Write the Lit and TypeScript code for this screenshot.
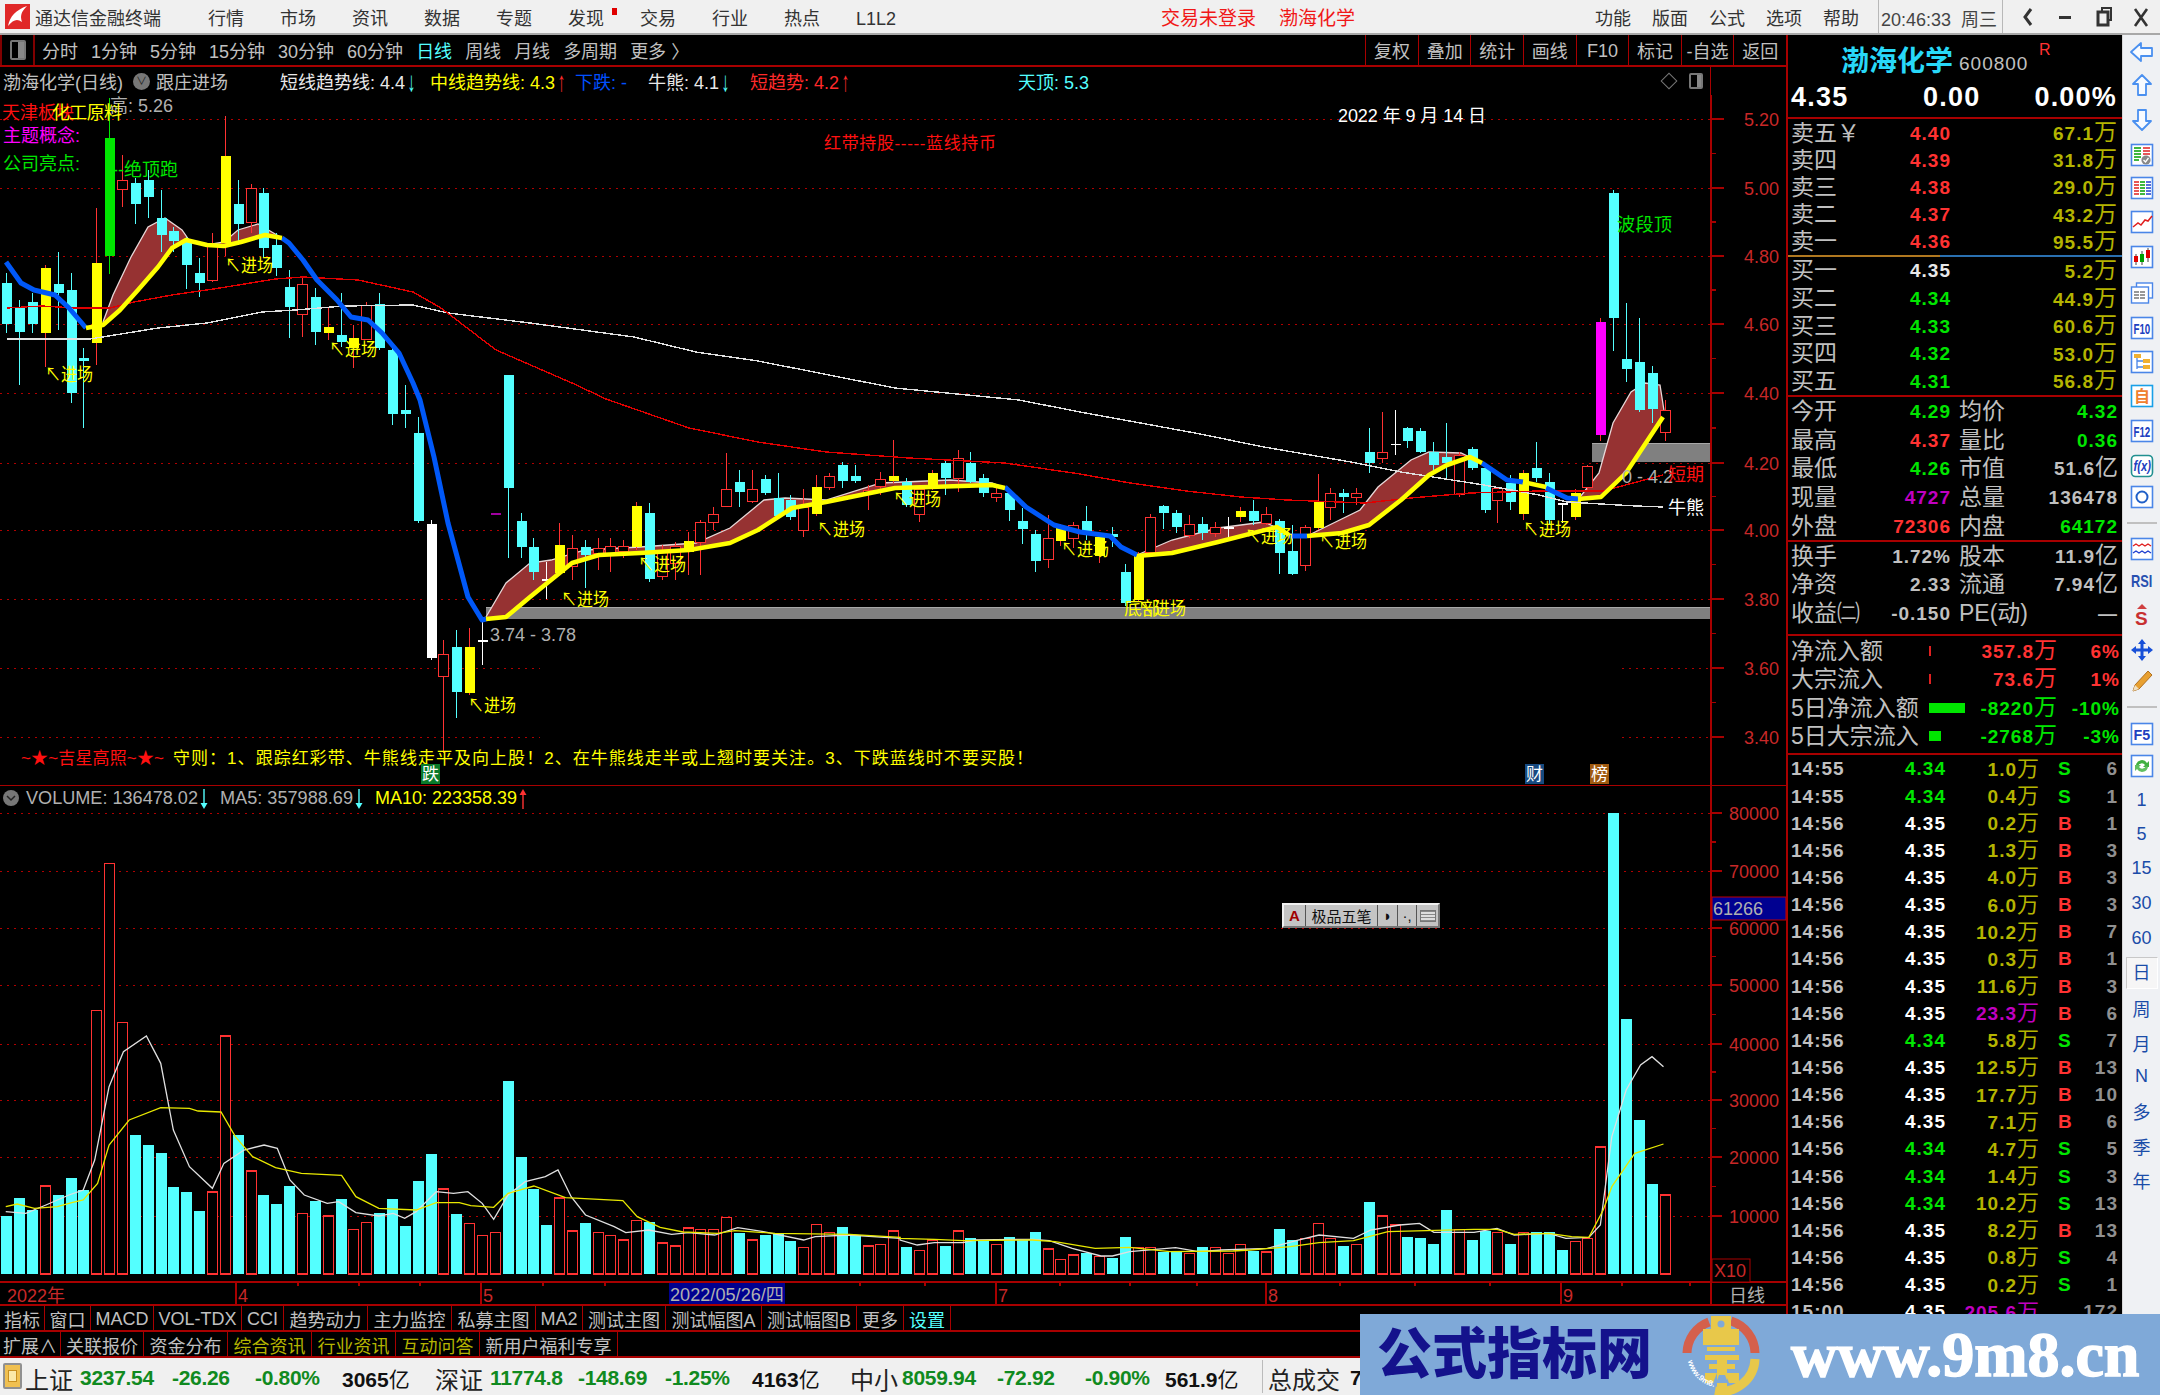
import { LitElement, html, css, svg, nothing } from "lit";
import { customElement } from "lit/decorators.js";

type P = [number, number];
const X = (i: number) => 6.3 + 12.855 * i;
const pts = (a: P[]) => a.map((p) => p.join(",")).join(" ");

const CANDLES: [string, number, number, number, number][] = [
  ["c",283,324,273,333],["c",307,332,300,385],["c",302,324,293,333],["y",268,333,265,367],["c",284,293,252,330],
  ["c",290,393,273,403],["c",358,361,348,428],["y",263,343,208,365],["g",138,256,98,274],["r",180,189,155,207],
  ["c",183,204,178,224],["c",180,197,170,218],["c",218,235,190,252],["c",231,241,227,252],["c",240,265,237,289],
  ["c",273,283,258,297],["r",245,280,233,282],["y",156,243,116,256],["c",204,224,180,245],["r",188,222,184,233],
  ["c",193,248,188,258],["c",245,268,233,276],["c",287,307,270,338],["r",284,314,277,337],["c",297,332,288,345],
  ["y",327,333,308,340],["c",335,342,293,347],["y",338,348,325,368],["r",305,339,302,340],["c",304,348,293,350],
  ["c",350,414,345,425],["c",410,414,385,428],["c",433,521,417,523],["w",524,658,520,660],["r",654,676,640,753],
  ["c",647,692,630,718],["y",647,693,628,695],["w",640,642,622,665],["p",513,515,513,515],["c",375,488,375,558],
  ["c",521,547,513,558],["c",547,572,538,580],["w",579,581,562,599],["y",545,573,523,575],["r",548,566,535,580],
  ["c",547,555,540,588],["r",548,553,538,570],["r",546,553,538,572],["r",546,551,540,558],["y",506,547,502,550],
  ["c",513,579,503,582],["r",550,576,545,580],["r",546,563,542,580],["y",541,552,532,575],["r",522,542,520,575],
  ["r",514,522,507,530],["r",489,506,453,507],["c",482,492,470,507],["r",489,501,470,503],["c",479,493,475,495],
  ["c",498,516,473,518],["c",500,517,495,520],["r",507,530,489,537],["y",487,514,475,516],["r",476,487,473,490],
  ["c",465,481,462,488],["c",476,481,465,483],["r",490,493,485,510],["r",479,486,472,495],["y",476,481,440,483],
  ["c",482,505,478,507],["r",489,514,485,522],["y",473,487,470,490],["c",463,478,461,495],["r",458,478,450,492],
  ["c",463,482,452,483],["c",478,493,474,497],["r",493,497,488,502],["c",493,510,490,521],["c",521,529,508,544],
  ["c",534,561,530,572],["r",538,559,515,568],["y",527,541,524,546],["r",525,538,522,548],["c",521,533,506,540],
  ["y",537,556,535,563],["c",534,537,527,547],["c",572,603,564,606],["y",554,600,552,602],["r",517,552,514,555],
  ["c",506,513,505,529],["c",513,527,510,533],["r",524,535,515,538],["c",524,533,517,540],["r",527,533,522,537],
  ["w",527,529,517,540],["y",511,517,507,522],["c",511,521,500,525],["r",514,523,507,525],["c",521,553,519,574],
  ["c",551,574,525,575],["r",527,565,525,571],["y",502,528,474,530],["r",493,507,488,520],["c",493,497,489,513],
  ["r",493,497,488,505],["c",452,463,428,473],["r",452,458,412,463],["w",444,445,410,455],["c",428,441,427,448],
  ["c",431,452,428,453],["c",452,465,442,470],["c",457,463,423,480],["r",455,494,452,497],["c",449,468,447,470],
  ["c",468,510,465,513],["r",488,500,487,523],["c",483,502,475,510],["y",473,514,470,520],["c",468,478,442,482],
  ["c",482,520,473,525],["w",503,505,503,523],["y",493,517,489,520],["r",466,487,465,490],["m",322,435,318,441],
  ["c",193,318,190,351],["c",359,369,303,382],["c",362,410,318,412],["c",373,409,366,423],["r",410,432,400,441],
];

const VOLS = ("c1187 c1133 c1170 r1098 c1124 c1075 c1110 r571 r130 r607 c944 c975 c998 c1101 c1115 c1173 r1116 r648 c944 r1053 " +
  "c1124 c1151 c1097 r1180 c1142 r1188 c1137 r1229 r1207 c1180 c1137 c1218 c1084 c1002 r1107 c1182 r1211 r1247 r1238 c782 " +
  "c1012 c1107 c1214 r1134 r1233 c1209 r1238 r1247 r1260 r1201 c1205 r1269 r1278 r1224 r1229 r1229 r1192 c1240 r1260 c1245 " +
  "c1240 c1263 r1283 r1214 r1238 c1222 c1245 r1278 r1274 r1233 c1282 r1292 r1260 c1277 r1233 c1255 c1264 r1273 c1250 c1260 " +
  "c1237 r1287 r1318 r1305 c1300 r1310 c1313 c1250 r1283 r1283 c1296 c1296 r1300 c1282 r1282 r1300 r1274 c1292 r1296 c1228 " +
  "c1260 r1256 r1210 r1256 c1277 r1274 c1147 r1188 r1215 c1250 c1255 c1273 c1169 r1228 c1260 c1233 r1237 c1273 r1237 c1237 " +
  "c1237 c1290 r1265 r1256 r981 c-20 c597 c899 c1093 r1125").split(" ");

const Y1: P[] = [[86,328],[103,325],[120,310],[138,290],[158,267],[172,248],[186,240],[207,245],[224,246],[241,242],[265,235],[282,238]];
const Y2: P[] = [[486,619],[506,617],[530,597],[551,580],[572,563],[599,555],[640,553],[689,550],[730,543],[758,530],[792,508],[826,502],[895,488],[930,487],[992,485],[1005,488]];
const Y3: P[] = [[1137,556],[1172,553],[1218,542],[1277,527],[1289,535]];
const Y4: P[] = [[1307,536],[1342,533],[1369,525],[1401,500],[1429,475],[1447,465],[1470,457],[1482,463]];
const Y5: P[] = [[1523,482],[1546,487]];
const Y6: P[] = [[1578,499],[1601,497],[1626,473],[1663,417]];
const B1: P[] = [[6,262],[21,283],[34,290],[55,295],[69,308],[86,328]];
const B2: P[] = [[282,238],[289,243],[303,260],[317,280],[337,300],[351,317],[368,320],[382,333],[399,353],[413,383],[420,400],[434,457],[448,523],[468,597],[482,620],[486,619]];
const B3: P[] = [[1005,487],[1026,507],[1054,525],[1080,532],[1110,536],[1121,547],[1137,555]];
const B4: P[] = [[1289,536],[1307,536]];
const B5: P[] = [[1482,463],[1507,480],[1523,482]];
const B6: P[] = [[1546,488],[1567,498],[1578,499]];

const BANDS: [P[], P[]][] = [
  [[[103,322],[113,295],[131,257],[148,227],[165,218],[182,230],[189,240],[207,245],[224,242],[238,230],[258,224],[282,238]], Y1],
  [[[486,617],[506,583],[530,563],[551,560],[585,550],[640,547],[696,543],[730,528],[764,500],[785,498],[826,500],[881,483],[950,480],[992,483],[1005,488]], Y2],
  [[[1137,555],[1172,540],[1218,528],[1264,522],[1289,533]], Y3],
  [[[1307,536],[1360,510],[1378,487],[1411,460],[1429,452],[1461,453],[1482,463]], Y4],
  [[[1580,497],[1599,473],[1613,423],[1631,392],[1645,383],[1660,385],[1665,417]], Y6],
];

const MA_RED: P[] = [[7,308],[41,306],[76,308],[110,308],[134,302],[172,295],[220,288],[275,279],[303,277],[358,280],[413,292],[441,308],[496,350],[572,383],[606,399],[689,428],[758,442],[826,452],[909,458],[1005,463],[1080,474],[1130,483],[1186,491],[1241,497],[1287,500],[1365,503],[1411,498],[1447,495],[1470,493],[1539,491],[1603,491],[1663,475]];
const MA_WHITE: P[] = [[7,339],[90,339],[158,328],[207,323],[262,312],[296,310],[344,306],[413,305],[448,313],[530,323],[634,337],[696,352],[758,361],[895,388],[1019,400],[1080,412],[1135,422],[1195,433],[1264,447],[1351,462],[1401,472],[1484,485],[1539,495],[1567,502],[1636,506],[1663,507]];

const z9 = (a: number[]): P[] => { const r: P[] = []; for (let i = 0; i < a.length; i += 2) r.push([a[i] / 1.742, 820 + a[i + 1] / 3]); return r; };
const z10 = (a: number[]): P[] => z9(a).map((p) => [p[0] + 900, p[1]] as P);
const VMA5: P[] = [...z9([10,1175,45,1180,80,1155,120,1125,145,1110,165,1020,190,800,215,695,255,648,280,730,302,930,330,1040,370,1105,390,1030,425,990,460,975,483,985,505,1080,530,1125,570,1150,590,1145,620,1178,660,1188,685,1180,705,1195,725,1175,760,1115,790,1120,815,1115,840,1150,860,1198,885,1125,915,1085,950,1070,972,1050,995,1130,1020,1185,1070,1220,1090,1238,1130,1230,1170,1243,1200,1238,1245,1245,1285,1223,1330,1235,1400,1260,1420,1250,1480,1245,1568,1255]),
  ...z10([0,1260,30,1275,60,1268,110,1268,130,1260,230,1258,260,1262,300,1285,350,1308,370,1308,400,1295,480,1283,520,1295,560,1290,640,1285,690,1262,730,1245,790,1255,820,1230,870,1215,905,1210,930,1237,1000,1237,1040,1225,1070,1245,1130,1240,1160,1255,1200,1252,1220,1215,1240,950,1265,810,1290,735,1310,710,1330,740])];
const VMA10: P[] = [...z9([10,1160,30,1152,60,1165,100,1160,125,1148,145,1140,170,1090,190,975,225,900,280,863,330,865,345,873,385,876,410,950,440,1010,480,1043,525,1060,595,1066,620,1130,660,1165,725,1170,760,1148,800,1148,820,1157,860,1162,885,1120,930,1098,985,1133,1085,1142,1110,1190,1150,1222,1190,1236,1250,1240,1280,1232,1350,1240,1480,1243,1568,1252]),
  ...z10([0,1255,60,1258,110,1262,230,1260,270,1265,340,1285,400,1282,470,1295,580,1293,610,1290,680,1280,730,1268,790,1262,850,1235,1000,1228,1040,1228,1070,1243,1130,1240,1170,1250,1200,1252,1225,1170,1240,1100,1280,1000,1330,972])];

const PRICE_TICKS: [string, number][] = [["5.20",119],["5.00",188],["4.80",256],["4.60",324],["4.40",393],["4.20",463],["4.00",530],["3.80",599],["3.60",668],["3.40",737]];
const VOL_TICKS: [string, number][] = [["80000",813],["70000",871],["60000",928],["50000",985],["40000",1044],["30000",1100],["20000",1157],["10000",1216]];

const ENTRY: P[] = [[45,375],[225,266],[329,350],[468,706],[561,600],[638,565],[817,530],[893,500],[1061,550],[1245,537],[1319,542],[1523,530],[1138,609]];

const TAB1: [string, number, string?][] = [["指标",45],["窗口",46],["MACD",63],["VOL-TDX",88],["CCI",42],["趋势动力",84],["主力监控",84],["私募主图",84],["MA2",47],["测试主图",83],["测试幅图A",96],["测试幅图B",95],["更多",47],["设置",47,"cy"]];
const TAB2: [string, number, string?][] = [["扩展∧",61],["关联报价",83],["资金分布",84],["综合资讯",84,"ol"],["行业资讯",84,"ol"],["互动问答",84,"ol"],["新用户福利专享",138]];

const BOOK: [string, string, string, string][] = [
  ["卖五","4.40","67.1","r"],["卖四","4.39","31.8","r"],["卖三","4.38","29.0","r"],["卖二","4.37","43.2","r"],["卖一","4.36","95.5","r"],
  ["买一","4.35","5.2","w"],["买二","4.34","44.9","g"],["买三","4.33","60.6","g"],["买四","4.32","53.0","g"],["买五","4.31","56.8","g"],
];
const STATS1: [string,string,string,string,string,string][] = [
  ["今开","4.29","g","均价","4.32","g"],["最高","4.37","r","量比","0.36","g"],["最低","4.26","g","市值","51.6亿","k"],
  ["现量","4727","m","总量","136478","k"],["外盘","72306","r","内盘","64172","g"],
];
const STATS2: [string,string,string,string,string,string][] = [
  ["换手","1.72%","k","股本","11.9亿","k"],["净资","2.33","k","流通","7.94亿","k"],["收益㈡","-0.150","k","PE(动)","—","k"],
];
const FLOWS: [string, number, string, string, string][] = [
  ["净流入额",2,"357.8万","6%","r"],["大宗流入",2,"73.6万","1%","r"],["5日净流入额",36,"-8220万","-10%","g"],["5日大宗流入",12,"-2768万","-3%","g"],
];
const T6 = "14:56";
const TICKS: [string,string,string,string,string,string?][] = [
  ["14:55","4.34","1.0","S","6"],["14:55","4.34","0.4","S","1"],[T6,"4.35","0.2","B","1"],[T6,"4.35","1.3","B","3"],[T6,"4.35","4.0","B","3"],
  [T6,"4.35","6.0","B","3"],[T6,"4.35","10.2","B","7"],[T6,"4.35","0.3","B","1"],[T6,"4.35","11.6","B","3"],[T6,"4.35","23.3","B","6","m"],
  [T6,"4.34","5.8","S","7"],[T6,"4.35","12.5","B","13"],[T6,"4.35","17.7","B","10"],[T6,"4.35","7.1","B","6"],[T6,"4.34","4.7","S","5"],
  [T6,"4.34","1.4","S","3"],[T6,"4.34","10.2","S","13"],[T6,"4.35","8.2","B","13"],[T6,"4.35","0.8","S","4"],[T6,"4.35","0.2","S","1"],
  ["15:00","4.35","205.6","","172","m"],
];
const STATUS: [number, string, string][] = [
  [25,"上证","lab"],[80,"3237.54","gn"],[172,"-26.26","gn"],[255,"-0.80%","gn"],[342,"3065亿","bk"],[435,"深证","lab"],[490,"11774.8","gn"],[578,"-148.69","gn"],
  [665,"-1.25%","gn"],[752,"4163亿","bk"],[850,"中小","lab"],[902,"8059.94","gn"],[997,"-72.92","gn"],[1085,"-0.90%","gn"],[1165,"561.9亿","bk"],[1268,"总成交","lab"],[1350,"7","bk"],
];
const INFO: [number, any, string?][] = [
  [3,"渤海化学(日线)","k"],[156,"跟庄进场","k"],[280,html`短线趋势线: 4.4<i class="arr cy">↓</i>`,"w"],[430,html`中线趋势线: 4.3<i class="arr rd">↑</i>`,"yl"],
  [575,"下跌: -","bl"],[648,html`牛熊: 4.1<i class="arr cy">↓</i>`,"w"],[750,html`短趋势: 4.2<i class="arr rd">↑</i>`,"rd"],[1018,"天顶: 5.3","cy"],
];

const TOOLS: [number, string][] = [
  [52,"left"],[84,"up"],[121,"down"],[155,"check"],[188,"grid"],[222,"line"],[257,"candle"],[293,"docs"],[328,"f10"],[363,"tree"],[395,"zi"],
  [432,"f12"],[466,"fx"],[499,"circle"],[523,"sep"],[546,"wave"],[581,"rsi"],[615,"s"],[650,"move"],[684,"pencil"],[707,"sep"],[731,"f5"],[766,"refresh"],
  [800,"t:1"],[834,"t:5"],[869,"t:15"],[903,"t:30"],[938,"t:60"],[973,"s:日"],[1008,"t:周"],[1043,"t:月"],[1076,"t:N"],[1111,"t:多"],[1146,"t:季"],[1180,"t:年"],
];

@customElement("app-root")
export class AppRoot extends LitElement {
  static styles = css`
    :host { display: block; width: 2160px; height: 1395px; position: relative; overflow: hidden; background: #000;
      font-family: "Liberation Sans", "Noto Sans CJK SC", sans-serif; color: #c0c0c0; }
    * { box-sizing: border-box; }
    i { font-style: normal; }
    .rd { color: #ff2a2a; } .cy { color: #54ffff; } .yl { color: #ffff00; } .w { color: #e8e8e8; } .bl { color: #0050ff; }
    .k { color: #c0c0c0; } .g { color: #00e600; } .r { color: #ff3232; } .m { color: #c000c0; } .ol { color: #b4b400; }
    .arr { display: inline-block; transform: scale(0.9, 1.55); transform-origin: 50% 60%; margin-left: 2px; font-weight: 700; }

    .menu { height: 35px; background: #f0f0f0; border-bottom: 2px solid #a8a8a8; display: flex; align-items: center; color: #333; font-size: 18px; }
    .menu .logo { margin-left: 5px; width: 25px; height: 25px; flex: none; }
    .menu .title { margin-left: 5px; width: 127px; }
    .menu .items { display: flex; gap: 36px; margin-left: 46px; align-items: baseline; }
    .menu .badge { position: relative; }
    .menu .badge::after { content: ""; position: absolute; left: 44px; top: 4px; width: 5px; height: 7px; background: #e00000; }
    .menu .alert { color: #f01818; font-size: 19px; margin-left: 265px; }
    .menu .alert + .alert { margin-left: 23px; }
    .menu .right { margin-left: auto; display: flex; align-items: stretch; height: 100%; }
    .menu .funcs { display: flex; gap: 21px; padding-right: 19px; align-items: center; }
    .menu .clock { border-left: 1px solid #b8b8b8; border-right: 1px solid #b8b8b8; display: flex; align-items: baseline; gap: 10px; padding: 5px 0 0 2px; width: 125px; color: #444; white-space: nowrap; }
    .menu .ctl { width: 157px; height: 33px; display: block; }

    .main { display: flex; height: 1323px; }
    .left { width: 1788px; flex: none; border-right: 2px solid #a80000; display: flex; flex-direction: column; }
    .period { height: 32px; flex: none; border-bottom: 2px solid #a80000; display: flex; align-items: center; font-size: 18px; }
    .period .ic { width: 35px; height: 30px; border: 1px solid #800000; border-width: 0 2px; display: flex; align-items: center; justify-content: center; flex: none; }
    .ic-box { width: 16px; height: 20px; border: 2px solid #777; border-radius: 2px; background: linear-gradient(90deg, #000 50%, #888 50%); }
    .period .pl { display: flex; gap: 13px; margin-left: 7px; align-items: baseline; }
    .period .btns { margin-left: auto; display: flex; height: 100%; }
    .period .btn { width: 52.6px; border-left: 1px solid #a80000; display: flex; align-items: center; justify-content: center; }
    .period .btn.lat { padding-top: 2px; }

    .info { height: 28px; flex: none; display: flex; align-items: center; font-size: 18px; position: relative; white-space: nowrap; }
    .info .cell { flex: none; }
    .info .dot { position: absolute; left: 133px; top: 6px; width: 17px; height: 17px; border-radius: 50%; background: #777; color: #222; font-size: 11px; text-align: center; line-height: 17px; }
    .info .tail { margin-left: auto; display: flex; align-items: center; height: 100%; }
    .info .dia { width: 12px; height: 12px; border: 1px solid #777; transform: rotate(45deg); margin-right: 14px; }
    .info .pane { width: 14px; height: 16px; border: 2px solid #777; border-radius: 2px; background: linear-gradient(90deg,#000 55%,#888 55%); margin-right: 7px; }
    .info .axis { width: 76px; height: 100%; border-left: 1px solid #a80000; }

    svg.chart { display: block; flex: none; width: 1786px; font-family: "Liberation Sans", "Noto Sans CJK SC", sans-serif; }
    svg.price { height: 690px; }
    svg.vol { height: 521px; }
    svg text { font-size: 18px; white-space: pre; }
    .grid { stroke: #b00000; stroke-width: 1; stroke-dasharray: 2 5; fill: none; shape-rendering: crispEdges; }
    .ax { stroke: #a80000; stroke-width: 1.5; shape-rendering: crispEdges; fill: none; }
    .axt { fill: #c82828; }
    .wick { stroke-width: 1; shape-rendering: crispEdges; }
    .body { shape-rendering: crispEdges; }
    .ma { fill: none; stroke-width: 1.4; shape-rendering: crispEdges; }
    .ma2 { fill: none; stroke-width: 1.3; }
    .thick { fill: none; stroke-linejoin: round; stroke-linecap: butt; }
    .t-y { fill: #ffff00; } .t-g { fill: #00e600; } .t-r { fill: #ff1010; } .t-m { fill: #ff00ff; } .t-w { fill: #ffffff; } .t-k { fill: #b0b0b0; } .t-c { fill: #54ffff; }
    .small { font-size: 17px; }

    .tabs { flex: none; height: 26px; display: flex; border-bottom: 2px solid #a80000; font-size: 18px; }
    .tabs .tab { flex: none; border-right: 1px solid #a80000; display: flex; align-items: center; justify-content: center; white-space: nowrap; padding-top: 1px; }
    .tabs .tab.lat { padding-top: 3px; }

    .panel { width: 334px; flex: none; overflow: hidden; font-size: 23px; color: #c0c0c0; display: flex; flex-direction: column; }
    .num { font-family: "Liberation Sans", sans-serif; font-size: 19px; font-weight: 700; letter-spacing: 1px; }
    .head { height: 45px; flex: none; display: flex; align-items: flex-end; padding-left: 53px; position: relative; }
    .head .nm { font-size: 28px; line-height: 37px; font-weight: 700; color: #28d8f8; }
    .head .code { font-size: 19px; line-height: 32px; margin-left: 6px; color: #c0c0c0; letter-spacing: 1px; }
    .head .rr { position: absolute; left: 251px; top: 6px; font-size: 16px; color: #ff3232; }
    .quote { height: 39px; flex: none; border-bottom: 2px solid #a80000; display: grid; grid-template-columns: 132px 60px 1fr; align-items: center; padding: 0 5px 2px 3px; color: #fff; font-size: 27px; font-weight: 700; letter-spacing: 1.2px; }
    .quote span:last-child { text-align: right; }
    .bk { height: 27.2px; display: grid; grid-template-columns: 119px 60px 1fr; padding: 0 5px 0 3px; align-items: center; line-height: 27px; flex: none; }
    .bk .amt { text-align: right; color: #b4b400; white-space: nowrap; }
    .bk.buy { height: 27.6px; }
    .split { height: 2px; flex: none; background: linear-gradient(90deg, #b07820 45.5%, #2a70b0 45.5%); }
    .line { height: 2px; flex: none; background: #a80000; }
    .sec1 { height: 143px; flex: none; }
    .sec2 { height: 92px; flex: none; }
    .sec3 { height: 117px; flex: none; }
    .st { display: flex; padding-left: 3px; align-items: center; line-height: 28px; white-space: nowrap; }
    .sec1 .st { height: 28.6px; }
    .sec2 .st { height: 28.3px; }
    .st .pair { width: 160px; display: flex; justify-content: space-between; align-items: center; }
    .st .pair + .pair { margin-left: 8px; width: 159px; }
    .fl { height: 28.5px; display: grid; grid-template-columns: 138px 36px 92px 63px; padding-left: 3px; align-items: center; line-height: 28px; white-space: nowrap; }
    .fl .bar { height: 10px; background: #00e600; }
    .fl .bar.r { background: #e02020; }
    .fl .v { text-align: right; }
    .tk { height: 27.15px; flex: none; display: grid; grid-template-columns: 100px 55px 93px 40px 39px; padding-left: 3px; align-items: center; line-height: 27px; font-size: 22px; white-space: nowrap; }
    .tk .pr, .tk .am, .tk .ct { text-align: right; }
    .tk .am { color: #b4b400; }
    .tk .am.m { color: #c000c0; }
    .tk .bs { padding-left: 19px; }
    .tk .ct { color: #909090; }
    .tk .wh { color: #fff; }

    .tools { width: 38px; flex: none; background: #eff1f4; display: flex; flex-direction: column; border-left: 1px solid #d8d8d8; font-size: 18px; color: #1a4ca8; }
    .slot { flex: none; display: flex; align-items: center; justify-content: center; }
    .slot svg { width: 24px; height: 24px; display: block; }
    .slot .sepl { width: 30px; height: 2px; background: #c0c0c0; }
    .slot.sel span { display: block; width: 32px; height: 32px; line-height: 30px; text-align: center; border: 1px solid #c8c8c8; border-right-color: #fff; border-bottom-color: #fff; background: #f6f6f6; }

    .status { height: 37px; background: #f0f0f0; display: flex; align-items: center; font-size: 21px; position: relative; white-space: nowrap; padding-top: 3px; }
    .status .sic { position: absolute; left: 3px; top: 5px; width: 19px; height: 26px; background: #f0c050; border: 2px solid #909090; border-radius: 2px; }
    .status .sic::after { content: ""; display: block; margin: 5px 3px; height: 10px; background: #fbe9a8; border: 1px solid #c89020; }
    .status .sp { flex: none; }
    .status .lab { font-size: 24px; color: #222; }
    .status .gn { color: #108a20; font-size: 21px; font-weight: 700; letter-spacing: -0.3px; }
    .status .bk2 { color: #111; font-size: 21px; }
    .status .bk2 b { font-weight: 700; }
    .status .sepv { position: absolute; left: 1262px; top: 2px; bottom: 2px; width: 1px; background: #bbb; }

    .ime { position: absolute; left: 1282px; top: 903px; width: 158px; height: 25px; background: #c4c4c4; border: 2px solid #f0f0f0; border-right-color: #777; border-bottom-color: #777; display: flex; color: #111; font-size: 15px; }
    .ime span { display: flex; align-items: center; justify-content: center; border-right: 1px solid #555; flex: none; }
    .ime .a { width: 22px; color: #a00000; font-weight: 700; }
    .ime .b { width: 72px; white-space: nowrap; }
    .ime .c { width: 20px; } .ime .d { width: 19px; } .ime .e { flex: 1; border-right: none; }
    .ime .kb { width: 16px; height: 12px; background: repeating-linear-gradient(0deg,#888 0 1px,#ddd 1px 3px); border: 1px solid #777; }

    .mark { position: absolute; left: 1360px; top: 1314px; width: 800px; height: 81px; background: #7fa9d8; display: flex; align-items: center; white-space: nowrap; }
    .mark .cn { margin-left: 17px; width: 304px; font-size: 55px; line-height: 81px; font-weight: 900; color: #14128c; letter-spacing: 0; }
    .mark svg { width: 80px; height: 80px; flex: none; }
    .mark .en { margin-left: 30px; font-family: "Liberation Serif", serif; font-weight: 700; font-size: 64px; line-height: 81px; color: #fff; -webkit-text-stroke: 1.5px #fff; }
  `;

  private candle(c: [string, number, number, number, number], i: number) {
    const [k, t, b, wt, wb] = c;
    const x = Math.round(X(i));
    const fill: any = { c: "#54ffff", y: "#ffff00", w: "#ffffff", g: "#00e600", m: "#ff00ff", p: "#a000a0" };
    const wc: any = { c: "#54ffff", y: "#ff3232", w: "#ffffff", g: "#00e600", m: "#ff3232", r: "#ff3232", p: "#a000a0" };
    return svg`<line class="wick" x1=${x + 0.5} x2=${x + 0.5} y1=${wt} y2=${wb} stroke=${wc[k]}></line>
      ${k === "r"
        ? svg`<rect class="body" x=${x - 4.5} y=${t + 0.5} width="10" height=${b - t} fill="#000" stroke="#ff3232" stroke-width="1.2"></rect>`
        : svg`<rect class="body" x=${x - 4.5} y=${t} width="10.5" height=${b - t} fill=${fill[k]}></rect>`}`;
  }

  private priceChart() {
    const grid = PRICE_TICKS.map(([, y], i) =>
      i < 8 ? svg`<line class="grid" x1="0" x2="1711" y1=${y} y2=${y}></line>`
        : svg`<line class="grid" x1="0" x2="540" y1=${y} y2=${y}></line><line class="grid" x1="1622" x2="1711" y1=${y} y2=${y}></line>`);
    const axis = PRICE_TICKS.map(([l, y], i) => {
      const next = PRICE_TICKS[i + 1];
      return svg`<line class="ax" x1="1711" x2="1724" y1=${y} y2=${y}></line>
        ${next ? svg`<line class="ax" x1="1711" x2="1716" y1=${(y + next[1]) / 2} y2=${(y + next[1]) / 2}></line>` : nothing}
        <text class="axt" x="1779" y=${y + 7} text-anchor="end">${l}</text>`;
    });
    return svg`<svg class="chart price" viewBox="0 95 1786 690">
      ${grid}
      <rect x="486" y="607" width="1225" height="12" fill="#808080"></rect><line x1="486" x2="1711" y1="607.5" y2="607.5" stroke="#a8a8a8"></line>
      <rect x="1592" y="443" width="119" height="19" fill="#808080"></rect><line x1="1592" x2="1711" y1="443.5" y2="443.5" stroke="#a8a8a8"></line>
      ${BANDS.map(([top, bot]) => svg`<polygon points=${pts([...top, ...[...bot].reverse()])} fill="#963232"></polygon><polyline class="ma2" points=${pts(top)} stroke="#e8d8d8"></polyline>`)}
      ${CANDLES.map((c, i) => this.candle(c, i))}
      <polyline class="ma" points=${pts(MA_WHITE)} stroke="#e0e0e0" stroke-width="1.6"></polyline>
      <polyline class="ma" points=${pts(MA_RED)} stroke="#e00000" stroke-width="1.6"></polyline>
      ${[B1, B2, B3, B4, B5, B6].map((b) => svg`<polyline class="thick" points=${pts(b)} stroke="#0058f8" stroke-width="5"></polyline>`)}
      ${[Y1, Y2, Y3, Y4, Y5, Y6].map((b) => svg`<polyline class="thick" points=${pts(b)} stroke="#ffff00" stroke-width="4.5"></polyline>`)}
      <line class="ax" x1="1711" x2="1711" y1="95" y2="785"></line>
      ${axis}
      ${ENTRY.map(([x, y]) => svg`<text class="t-y" x=${x} y=${y + 6} textLength="48" lengthAdjust="spacingAndGlyphs">↖进场</text>`)}
      <text class="t-y" x="1124" y="615">底部</text>
      <text class="t-r" x="2" y="119" textLength="72">天津板块</text>
      <text class="t-k" x="110" y="112">高: 5.26</text>
      <text class="t-y" x="52" y="119" textLength="70">化工原料</text>
      <text class="t-m" x="3" y="142">主题概念:</text>
      <text class="t-g" x="3" y="170">公司亮点:</text>
      <text class="t-g" x="112" y="176">--绝顶跑</text>
      <text class="t-r small" x="824" y="149" textLength="172">红带持股-----蓝线持币</text>
      <text class="t-w" x="1338" y="122" textLength="148">2022 年 9 月 14 日</text>
      <text class="t-g" x="1617" y="231" textLength="55">波段顶</text>
      <text class="t-k" x="490" y="641" textLength="86">3.74 - 3.78</text>
      <text class="t-k" x="1622" y="483">0 - 4.2</text>
      <text class="t-r" x="1668" y="481">短期</text>
      <text class="t-w" x="1668" y="514">牛熊</text>
      <text class="t-r small" x="21" y="764" textLength="143">~★~吉星高照~★~</text>
      <text class="t-y small" x="173" y="764" textLength="860">守则：1、跟踪红彩带、牛熊线走平及向上股！2、在牛熊线走半或上翘时要关注。3、下跌蓝线时不要买股！</text>
      ${[[421,"跌","#0a7a2a"],[1525,"财","#174a80"],[1590,"榜","#a05a10"]].map(([x,t,c]) => svg`<rect x=${x} y="764" width="19" height="20" fill=${c}></rect><text class="t-w small" x=${(x as number) + 1} y="780">${t}</text>`)}
    </svg>`;
  }

  private tallArrow(x: number, down: boolean, c: string) {
    return down
      ? svg`<path d="M${x} 789 V805" stroke=${c} stroke-width="1.4"></path><path d="M${x - 3.5} 803 H${x + 3.5} L${x} 809 Z" fill=${c}></path>`
      : svg`<path d="M${x} 793 V809" stroke=${c} stroke-width="1.4"></path><path d="M${x - 3.5} 795 H${x + 3.5} L${x} 789 Z" fill=${c}></path>`;
  }

  private volChart() {
    const base = 1274;
    return svg`<svg class="chart vol" viewBox="0 785 1786 521">
      ${VOL_TICKS.map(([, y]) => svg`<line class="grid" x1="0" x2="1711" y1=${y} y2=${y}></line>`)}
      ${VOLS.map((v, i) => {
        const x = Math.round(X(i));
        const top = 820 + Number(v.slice(1)) / 3;
        return v[0] === "c"
          ? svg`<rect class="body" x=${x - 5} y=${top} width="10.5" height=${base - top} fill="#54ffff"></rect>`
          : svg`<rect class="body" x=${x - 4.5} y=${top} width="10" height=${base - top} fill="#000" stroke="#ff3232" stroke-width="1.2"></rect>`;
      })}
      <polyline class="ma2" points=${pts(VMA5)} stroke="#e0e0e0"></polyline>
      <polyline class="ma2" points=${pts(VMA10)} stroke="#e8e800"></polyline>
      <line class="ax" x1="0" x2="1786" y1="785.5" y2="785.5"></line>
      <line class="ax" x1="1711" x2="1711" y1="785" y2="1306"></line>
      <line class="ax" x1="0" x2="1786" y1="1282" y2="1282"></line>
      <line class="ax" x1="0" x2="1786" y1="1305" y2="1305"></line>
      ${VOL_TICKS.map(([l, y], i) => {
        const next = VOL_TICKS[i + 1];
        return svg`<line class="ax" x1="1711" x2="1722" y1=${y} y2=${y}></line>
          ${next ? svg`<line class="ax" x1="1711" x2="1716" y1=${(y + next[1]) / 2} y2=${(y + next[1]) / 2}></line>` : nothing}
          <text class="axt" x="1779" y=${y + 7} text-anchor="end">${l}</text>`;
      })}
      <rect x="1712" y="897" width="74" height="23" fill="#000090" stroke="#c00000"></rect>
      <text class="t-k" x="1713" y="915">61266</text>
      <rect x="1712" y="1259" width="38" height="23" fill="#000" stroke="#a80000"></rect>
      <text class="axt" x="1714" y="1277">X10</text>
      <circle cx="11" cy="798" r="8" fill="#777"></circle><polyline points="7,796 11,800 15,796" fill="none" stroke="#222" stroke-width="1.5"></polyline>
      <text class="t-k" x="26" y="804" textLength="172" lengthAdjust="spacingAndGlyphs">VOLUME: 136478.02</text>${this.tallArrow(204, true, "#54ffff")}
      <text class="t-k" x="220" y="804" textLength="133" lengthAdjust="spacingAndGlyphs">MA5: 357988.69</text>${this.tallArrow(359, true, "#54ffff")}
      <text class="t-y" x="375" y="804" textLength="142" lengthAdjust="spacingAndGlyphs">MA10: 223358.39</text>${this.tallArrow(523, false, "#ff3232")}
      ${[236, 481, 996, 1266, 1561].map((x) => svg`<line class="ax" x1=${x} x2=${x} y1="1282" y2="1305"></line>`)}
      ${[298, 359, 420, 543, 605, 730, 860, 925, 1060, 1130, 1197, 1340, 1415, 1490, 1622, 1690].map((x) => svg`<line class="ax" x1=${x} x2=${x} y1="1282" y2="1286"></line>`)}
      <text class="axt" x="7" y="1302">2022年</text>
      <text class="axt" x="238" y="1302">4</text>
      <text class="axt" x="483" y="1302">5</text>
      <text class="axt" x="998" y="1302">7</text>
      <text class="axt" x="1268" y="1302">8</text>
      <text class="axt" x="1563" y="1302">9</text>
      <rect x="669" y="1283" width="116" height="21" fill="#000090"></rect>
      <text class="t-k" x="670" y="1301" textLength="114" lengthAdjust="spacingAndGlyphs">2022/05/26/四</text>
      <text class="t-k" x="1729" y="1302">日线</text>
    </svg>`;
  }

  private icon(k: string) {
    const box = svg`<rect x="1.5" y="1.5" width="21" height="21" fill="#fff" stroke="#4a86e8" stroke-width="1.6"></rect>`;
    const lbl = (t: string, sx: number) => svg`${box}<g transform="translate(3.5,18) scale(${sx},1)"><text fill="#2040c0" style="font-size:15px;font-weight:700">${t}</text></g>`;
    const arrow = (d: string) => svg`<path d=${d} fill="#f8fbff" stroke="#4a90f0" stroke-width="1.8" stroke-linejoin="round"></path>`;
    switch (k) {
      case "left": return svg`<svg viewBox="0 0 24 24">${arrow("M1 12 L11 3 V8 H22 V16 H11 V21 Z")}</svg>`;
      case "up": return svg`<svg viewBox="0 0 24 24">${arrow("M12 2 L21 11 H16 V22 H8 V11 H3 Z")}</svg>`;
      case "down": return svg`<svg viewBox="0 0 24 24">${arrow("M12 22 L21 13 H16 V2 H8 V13 H3 Z")}</svg>`;
      case "check": return svg`<svg viewBox="0 0 24 24">${box}
        <path d="M4 5h7M4 8h7M4 11h7M4 14h7M4 17h5" stroke="#00a000" stroke-width="1.4"></path><path d="M13 5h7M13 8h7M13 11h7" stroke="#e02020" stroke-width="1.4"></path>
        <circle cx="16" cy="17" r="4.6" fill="#888"></circle><path d="M13.5 17l2 2 3-4" stroke="#fff" stroke-width="1.3" fill="none"></path></svg>`;
      case "grid": return svg`<svg viewBox="0 0 24 24">${box}
        <path d="M4 6h5M4 9h5M4 12h5M4 15h5M4 18h5" stroke="#e02020" stroke-width="1.5"></path><path d="M10 6h5M10 9h5M10 12h5M10 15h5M10 18h5" stroke="#00a000" stroke-width="1.5"></path><path d="M16 6h5M16 9h5M16 12h5M16 15h5M16 18h5" stroke="#2040d0" stroke-width="1.5"></path></svg>`;
      case "line": return svg`<svg viewBox="0 0 24 24">${box}<polyline points="3,17 8,13 11,15 15,10 18,11 22,6" fill="none" stroke="#e02020" stroke-width="1.5"></polyline></svg>`;
      case "candle": return svg`<svg viewBox="0 0 24 24">${box}
        <path d="M6 9v11M12 6v14M18 3v14" stroke="#444"></path><rect x="4" y="11" width="4" height="6" fill="#e00000"></rect><rect x="10" y="9" width="4" height="8" fill="#00a000"></rect><rect x="16" y="5" width="4" height="8" fill="#e00000"></rect></svg>`;
      case "docs": return svg`<svg viewBox="0 0 24 24"><rect x="6.5" y="2" width="16" height="15" fill="#fff" stroke="#4a86e8" stroke-width="1.4"></rect><rect x="1.5" y="6" width="17" height="16" fill="#fff" stroke="#4a86e8" stroke-width="1.4"></rect><path d="M4 11h12M4 14h12M4 17h12" stroke="#777" stroke-width="1.6" stroke-dasharray="5 1"></path></svg>`;
      case "f10": return svg`<svg viewBox="0 0 24 24">${lbl("F10", 0.65)}</svg>`;
      case "f12": return svg`<svg viewBox="0 0 24 24">${lbl("F12", 0.65)}</svg>`;
      case "f5": return svg`<svg viewBox="0 0 24 24">${lbl("F5", 0.95)}</svg>`;
      case "tree": return svg`<svg viewBox="0 0 24 24">${box}<path d="M7 7v12M7 11h6M7 17h6" stroke="#4a86e8" stroke-width="1.3" fill="none"></path><rect x="4" y="4" width="7" height="4" fill="#f0b030"></rect><rect x="13" y="9" width="7" height="4" fill="#f0b030"></rect><rect x="13" y="15" width="7" height="4" fill="#f0b030"></rect></svg>`;
      case "zi": return svg`<svg viewBox="0 0 24 24"><rect x="1.5" y="1.5" width="21" height="21" fill="#fff" stroke="#18a0e8" stroke-width="1.6"></rect><text x="4" y="18" fill="#f08030" style="font-size:16px;font-weight:700">自</text></svg>`;
      case "fx": return svg`<svg viewBox="0 0 24 24"><rect x="1.5" y="1.5" width="21" height="21" rx="4" fill="#fff" stroke="#209090" stroke-width="1.6"></rect><g transform="translate(3.5,17) scale(.8,1)"><text fill="#2040c0" style="font-size:14px;font-style:italic;font-weight:700">f(x)</text></g></svg>`;
      case "circle": return svg`<svg viewBox="0 0 24 24">${box}<circle cx="12" cy="12" r="5.5" fill="none" stroke="#2060c8" stroke-width="2"></circle></svg>`;
      case "wave": return svg`<svg viewBox="0 0 24 24">${box}<polyline points="3,9 6,7 9,9 12,7 15,9 18,7 21,9" fill="none" stroke="#e02020" stroke-width="1.4"></polyline><polyline points="3,16 6,14 9,16 12,14 15,16 18,14 21,16" fill="none" stroke="#2040d0" stroke-width="1.4"></polyline></svg>`;
      case "rsi": return svg`<svg viewBox="0 0 24 24"><g transform="translate(1,18) scale(.8,1)"><text fill="#2850b0" style="font-size:16px;font-weight:700">RSI</text></g></svg>`;
      case "s": return svg`<svg viewBox="0 0 24 24"><path d="M12 1l5 5H7z" fill="#d04040"></path><text x="5" y="22" fill="#c83030" style="font-size:19px;font-weight:700">S</text></svg>`;
      case "move": return svg`<svg viewBox="0 0 24 24"><path d="M12 1l4 5h-2.5v4.5H18V8l5 4-5 4v-2.5h-4.5V18H16l-4 5-4-5h2.5v-4.5H6V16l-5-4 5-4v2.5h4.5V6H8z" fill="#1850d8"></path></svg>`;
      case "pencil": return svg`<svg viewBox="0 0 24 24"><path d="M18 2l4 4L9 20l-6 2 2-6z" fill="#e8a030" stroke="#b07020"></path><path d="M3 22l2-6 4 4z" fill="#f0e0c0"></path></svg>`;
      case "refresh": return svg`<svg viewBox="0 0 24 24">${box}<path d="M6 11a6 6 0 0 1 11-2l2-2v6h-6l2-2a4 4 0 0 0-7 1z" fill="#40b040"></path><path d="M18 13a6 6 0 0 1-11 2l-2 2v-6h6l-2 2a4 4 0 0 0 7-1z" fill="#60c060"></path></svg>`;
    }
    return nothing;
  }

  private tools() {
    let prev = 35;
    return TOOLS.map(([cy, k], i) => {
      const nxt = TOOLS[i + 1];
      const end = nxt ? (cy + nxt[0]) / 2 : cy + 17;
      const top = i === 0 ? 2 * cy - end : prev;
      const h = end - top;
      const pad = i === 0 ? top - 35 : 0;
      prev = end;
      const txt = k.startsWith("t:") || k.startsWith("s:");
      return html`<div class="slot ${k.startsWith("s:") ? "sel" : ""}" style="height:${h}px;margin-top:${pad}px">
        ${k === "sep" ? html`<div class="sepl"></div>` : txt ? html`<span>${k.slice(2)}</span>` : this.icon(k)}
      </div>`;
    });
  }

  private val(v: string, cls: string) {
    const m = v.match(/^(.*?)([万亿])$/);
    return html`<span class=${cls}><span class="num">${m ? m[1] : v}</span>${m ? m[2] : ""}</span>`;
  }

  private statusCell(t: string) {
    const m = t.match(/^(.*?)(亿)$/);
    return m ? html`<b>${m[1]}</b>${m[2]}` : html`<b>${t}</b>`;
  }

  private tabs(list: [string, number, string?][]) {
    return html`<div class="tabs">${list.map(([t, w, c]) => html`<div class="tab ${c ?? ""} ${/^[A-Z0-9-]+$/.test(t) ? "lat" : ""}" style="width:${w}px">${t}</div>`)}</div>`;
  }

  render() {
    return html`
      <div class="menu">
        <svg class="logo" viewBox="0 0 25 25"><rect width="25" height="25" fill="#e02828"></rect><path d="M3 22 C5 12 11 6 22 2 C16 8 15 12 17 18 C12 14 8 16 3 22 Z" fill="#fff"></path></svg>
        <span class="title">通达信金融终端</span>
        <div class="items">
          <span>行情</span><span>市场</span><span>资讯</span><span>数据</span><span>专题</span><span class="badge">发现</span><span>交易</span><span>行业</span><span>热点</span><span>L1L2</span>
        </div>
        <span class="alert">交易未登录</span><span class="alert">渤海化学</span>
        <div class="right">
          <div class="funcs"><span>功能</span><span>版面</span><span>公式</span><span>选项</span><span>帮助</span></div>
          <div class="clock"><span>20:46:33</span><span>周三</span></div>
          <svg class="ctl" viewBox="0 0 157 33">
            <polyline points="28,9 22,17 28,25" fill="none" stroke="#333" stroke-width="3"></polyline>
            <rect x="56" y="16" width="12" height="3" fill="#333"></rect>
            <rect x="95" y="12" width="10" height="13" fill="none" stroke="#333" stroke-width="3"></rect><path d="M99 11V8h9v12h-2" fill="none" stroke="#333" stroke-width="2"></path>
            <path d="M132 9l12 17M144 9l-12 17" stroke="#333" stroke-width="2.6"></path>
          </svg>
        </div>
      </div>
      <div class="main">
        <div class="left">
          <div class="period">
            <div class="ic"><div class="ic-box"></div></div>
            <div class="pl">
              <span>分时</span><span>1分钟</span><span>5分钟</span><span>15分钟</span><span>30分钟</span><span>60分钟</span><span class="cy">日线</span><span>周线</span><span>月线</span><span>多周期</span><span>更多 〉</span>
            </div>
            <div class="btns">${["复权","叠加","统计","画线","F10","标记","-自选","返回"].map((t) => html`<div class="btn ${t === "F10" ? "lat" : ""}">${t}</div>`)}</div>
          </div>
          <div class="info">
            <span class="dot">∨</span>
            ${INFO.map(([x, t, c], i) => {
              const next = INFO[i + 1];
              return html`<span class="cell ${c}" style="width:${next ? next[0] - x : 72}px;margin-left:${i === 0 ? x : 0}px">${t}</span>`;
            })}
            <div class="tail"><div class="dia"></div><div class="pane"></div><div class="axis"></div></div>
          </div>
          ${this.priceChart()}
          ${this.volChart()}
          ${this.tabs(TAB1)}
          ${this.tabs(TAB2)}
        </div>
        <div class="panel">
          <div class="head"><span class="nm">渤海化学</span><span class="code">600800</span><span class="rr">R</span></div>
          <div class="quote"><span>4.35</span><span>0.00</span><span>0.00%</span></div>
          ${BOOK.slice(0, 5).map(([l, p, a, c], i) => html`<div class="bk"><span>${l}${i === 0 ? "￥" : ""}</span><span class="num ${c}">${p}</span><span class="amt"><span class="num">${a}</span>万</span></div>`)}
          <div class="split"></div>
          ${BOOK.slice(5).map(([l, p, a, c]) => html`<div class="bk buy"><span>${l}</span><span class="num ${c}">${p}</span><span class="amt"><span class="num">${a}</span>万</span></div>`)}
          <div class="line"></div>
          <div class="sec1">${STATS1.map(([a, b, c, d, e, f]) => html`<div class="st"><div class="pair"><span>${a}</span>${this.val(b, c)}</div><div class="pair"><span>${d}</span>${this.val(e, f)}</div></div>`)}</div>
          <div class="line"></div>
          <div class="sec2">${STATS2.map(([a, b, c, d, e, f]) => html`<div class="st"><div class="pair"><span>${a}</span>${this.val(b, c)}</div><div class="pair"><span>${d}</span>${this.val(e, f)}</div></div>`)}</div>
          <div class="line"></div>
          <div class="sec3">${FLOWS.map(([l, w, v, p, c]) => html`<div class="fl"><span>${l}</span><div class="bar ${c === "r" ? "r" : ""}" style="width:${w}px"></div><span class="v ${c}">${this.val(v, "")}</span><span class="v ${c}"><span class="num">${p}</span></span></div>`)}</div>
          <div class="line"></div>
          ${TICKS.map(([t, p, a, s, n, m]) => html`<div class="tk"><span class="num">${t}</span><span class="pr num ${p === "4.34" ? "g" : "wh"}">${p}</span><span class="am ${m ?? ""}"><span class="num">${a}</span>万</span><span class="bs num ${s === "B" ? "r" : "g"}">${s}</span><span class="ct num">${n}</span></div>`)}
        </div>
        <div class="tools">${this.tools()}</div>
      </div>
      <div class="status">
        <span class="sic"></span>
        <span class="sepv"></span>
        ${STATUS.map(([x, t, c], i) => {
          const next = STATUS[i + 1];
          return html`<span class="sp ${c === "bk" ? "bk2" : c}" style="width:${next ? next[0] - x : 30}px;margin-left:${i === 0 ? x : 0}px">${c === "bk" ? this.statusCell(t) : t}</span>`;
        })}
      </div>
      <div class="ime"><span class="a">A</span><span class="b">极品五笔</span><span class="c">◗</span><span class="d">·,</span><span class="e"><i class="kb"></i></span></div>
      <div class="mark">
        <span class="cn">公式指标网</span>
        <svg viewBox="0 0 80 80">
          <path d="M6 38 A34 34 0 0 1 28 7" fill="none" stroke="#d4604c" stroke-width="9"></path>
          <path d="M50 6 A34 34 0 0 1 74 38" fill="none" stroke="#d4604c" stroke-width="9"></path>
          <path d="M74 44 A34 34 0 0 1 34 76" fill="none" stroke="#e8c84a" stroke-width="9"></path>
          <path d="M30 1 H50 V14 H58 V30 H22 V14 H30 Z" fill="#e8c84a"></path>
          <circle cx="40" cy="9" r="3.5" fill="#7fa9d8"></circle>
          <rect x="26" y="32" width="28" height="4" fill="#e8c84a"></rect>
          <path d="M24 40 H58 V45 H24 Z M28 49 H54 V54 H28 Z M24 58 H36 L32 68 H24 Z M44 58 H58 V68 H48 Z M36 44 H46 V76 H36 Z" fill="#e8c84a"></path>
          <path d="M38 60 h6 l3 8 h-12 z" fill="#7fa9d8"></path>
          <path id="wmArc" d="M7 46 A33 33 0 0 0 34 72" fill="none"></path>
          <text fill="#fff" style="font-size:8px;font-weight:700"><textPath href="#wmArc">www.9m8.cn</textPath></text>
        </svg>
        <span class="en">www.9m8.cn</span>
      </div>
    `;
  }
}
